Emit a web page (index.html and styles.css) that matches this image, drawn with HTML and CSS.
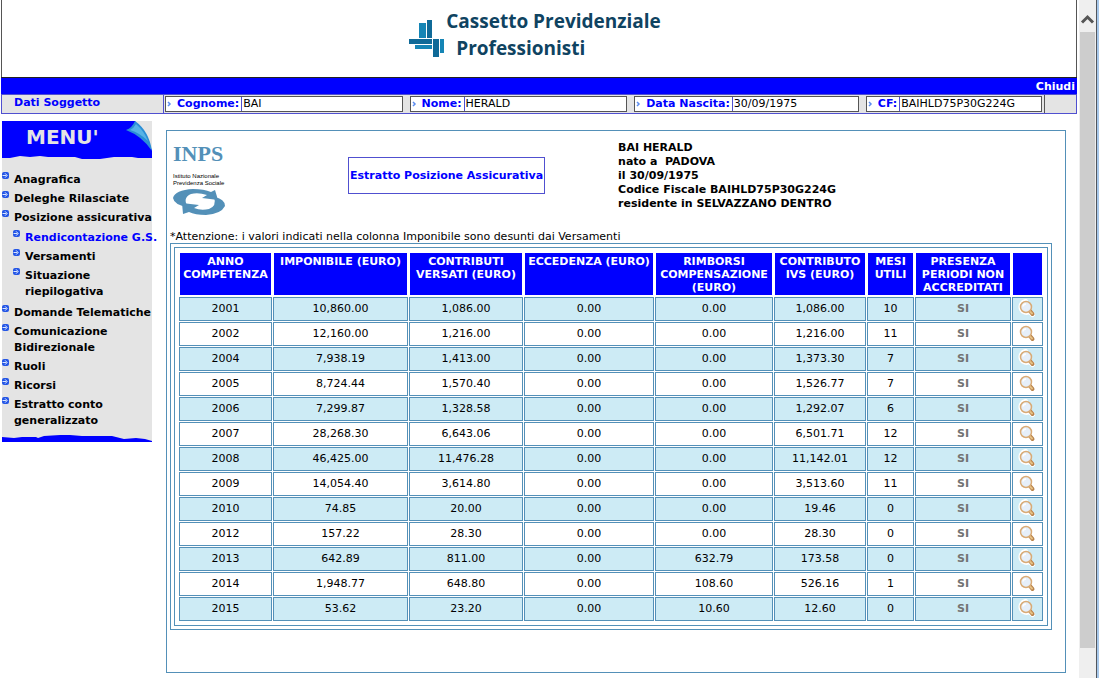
FILE: index.html
```html
<!DOCTYPE html>
<html lang="it">
<head>
<meta charset="utf-8">
<title>Cassetto Previdenziale Professionisti</title>
<link rel="stylesheet" href="styles.css">
</head>
<body>
<svg class="defs" width="0" height="0" aria-hidden="true">
  <symbol id="lens" viewBox="0 0 20 20">
    <path d="M7.500 2.500a5.500 5.500 0 1 0 4 10l3 3" fill="#fff" stroke="#fff" stroke-width="5" stroke-linejoin="round" stroke-linecap="round"/>
    <path d="M12 12l2.500 3" stroke="#b9824a" stroke-width="4" stroke-linecap="round"/>
    <path d="M11.500 12l2.500 2.500" stroke="#e6c184" stroke-width="2" stroke-linecap="round"/>
    <circle cx="8" cy="8" r="5.500" fill="#e6effa" stroke="#d9ab76" stroke-width="1.500"/>
    <path d="M5 7.500a3 3 0 0 1 3-2.500" stroke="#fff" stroke-width="1.500" fill="none"/>
  </symbol>
  <symbol id="bullet" viewBox="0 0 7 7">
    <rect width="7" height="7" rx="2" fill="#2456e6"/>
    <path d="M0.500 3.500h4M3 1.300l2.200 2.200L3 5.700" stroke="#dbe6ff" stroke-width="1" fill="none"/>
  </symbol>
  <symbol id="chev" viewBox="0 0 5 6">
    <path d="M1 1l2 2-2 2" stroke="#5b8cf0" stroke-width="1.500" fill="none"/>
  </symbol>
</svg>
<div class="window">
  <div class="page">
    <header class="banner">
      <svg class="brand-mark" viewBox="0 0 37 40" aria-hidden="true">
        <rect x="10" y="4" width="7" height="15" fill="#1585b5"/>
        <rect x="18" y="1" width="5" height="18" fill="#0f6a98"/>
        <rect x="0" y="20" width="23" height="5" fill="#0f6a98"/>
        <rect x="6" y="26" width="17" height="4" fill="#1585b5"/>
        <rect x="24" y="20" width="6" height="18" fill="#0f6a98"/>
        <rect x="31" y="20" width="4" height="14" fill="#1585b5"/>
      </svg>
      <h1 class="title"><span>Cassetto Previdenziale</span><span class="title-second">Professionisti</span></h1>
    </header>
    <div class="topbar"><a class="close" href="#">Chiudi</a></div>
    <form class="subject">
      <div class="subject-title">Dati Soggetto</div>
      <div class="fields">
        <div class="field surname"><label for="cognome"><svg class="chev"><use href="#chev"/></svg>Cognome:</label><input id="cognome" value="BAI"></div>
        <div class="field name"><label for="nome"><svg class="chev"><use href="#chev"/></svg>Nome:</label><input id="nome" value="HERALD"></div>
        <div class="field birth"><label for="nascita"><svg class="chev"><use href="#chev"/></svg>Data Nascita:</label><input id="nascita" value="30/09/1975"></div>
        <div class="field code"><label for="cf"><svg class="chev"><use href="#chev"/></svg>CF:</label><input id="cf" value="BAIHLD75P30G224G"></div>
      </div>
      <div class="subject-end"></div>
    </form>
    <div class="body">
      <nav class="menu">
        <div class="menu-head">
          <svg class="menu-art" viewBox="0 0 150 38" preserveAspectRatio="none" aria-hidden="true">
            <path d="M0 0H133L150 29V37H136L130 36H112L98 38H80L73 36H46L38 35 28 36 18 35 8 37H0z" fill="#00f"/>
            <path d="M124 9Q130 7 133 0Q147 10 150 30Q140 15 124 9z" fill="#2b8fd6"/>
            <path d="M128 9Q132 7 134 3Q142 10 146 20Q138 12 128 9z" fill="#57b3e6"/>
          </svg>
          <span class="menu-title">MENU'</span>
        </div>
        <ul class="menu-list">
          <li><svg class="bullet"><use href="#bullet"/></svg><a href="#">Anagrafica</a></li>
          <li><svg class="bullet"><use href="#bullet"/></svg><a href="#">Deleghe Rilasciate</a></li>
          <li><svg class="bullet"><use href="#bullet"/></svg><a href="#">Posizione assicurativa</a></li>
          <li class="group"><ul class="submenu">
            <li><svg class="bullet"><use href="#bullet"/></svg><a class="current" href="#">Rendicontazione G.S.</a></li>
            <li><svg class="bullet"><use href="#bullet"/></svg><a href="#">Versamenti</a></li>
            <li><svg class="bullet"><use href="#bullet"/></svg><a href="#">Situazione<br>riepilogativa</a></li>
          </ul></li>
          <li><svg class="bullet"><use href="#bullet"/></svg><a href="#">Domande Telematiche</a></li>
          <li><svg class="bullet"><use href="#bullet"/></svg><a href="#">Comunicazione<br>Bidirezionale</a></li>
          <li><svg class="bullet"><use href="#bullet"/></svg><a href="#">Ruoli</a></li>
          <li><svg class="bullet"><use href="#bullet"/></svg><a href="#">Ricorsi</a></li>
          <li><svg class="bullet"><use href="#bullet"/></svg><a href="#">Estratto conto<br>generalizzato</a></li>
        </ul>
        <svg class="menu-foot" viewBox="0 0 150 7" preserveAspectRatio="none" aria-hidden="true"><path d="M0 2L12 3 20 2H34L36 3 42 1 58 0 68 0 80 1H110L122 4 134 3 143 4 150 6V7H0z" fill="#00f"/></svg>
      </nav>
      <main class="panel">
        <div class="intro">
          <div class="inps">
            <span class="inps-name">INPS</span>
            <span class="inps-sub">Istituto Nazionale<br>Previdenza Sociale</span>
            <svg class="inps-art" viewBox="0 0 52 26" aria-hidden="true">
              <path d="M15 18Q1 16 0 9Q2 1 20 0Q31 0 38 3L42 1 45 11 29 9 34 6Q25 3 18 5Q9 9 15 18z" fill="#5390b8"/>
              <path d="M41 8Q52 10 52 17Q48 25 33 26Q22 26 16 23L10 25 9 14 26 16 21 19Q28 22 36 20Q44 17 41 8z" fill="#5390b8"/>
            </svg>
          </div>
          <div class="doc-title"><a href="#">Estratto Posizione Assicurativa</a></div>
          <address class="person">BAI HERALD<br>nato a&nbsp; PADOVA<br>il 30/09/1975<br>Codice Fiscale BAIHLD75P30G224G<br>residente in SELVAZZANO DENTRO</address>
        </div>
        <p class="note">*Attenzione: i valori indicati nella colonna Imponibile sono desunti dai Versamenti</p>
        <div class="frame"><div class="frame-inner">
          <table class="grid">
            <colgroup><col class="w-year"><col class="w-base"><col class="w-paid"><col class="w-over"><col class="w-comp"><col class="w-ivs"><col class="w-months"><col class="w-gaps"><col class="w-view"></colgroup>
            <thead><tr><th>ANNO COMPETENZA</th><th>IMPONIBILE (EURO)</th><th>CONTRIBUTI VERSATI (EURO)</th><th>ECCEDENZA (EURO)</th><th>RIMBORSI COMPENSAZIONE (EURO)</th><th>CONTRIBUTO IVS (EURO)</th><th>MESI UTILI</th><th>PRESENZA PERIODI NON ACCREDITATI</th><th></th></tr></thead>
            <tbody id="rows"></tbody>
          </table>
        </div></div>
      </main>
    </div>
  </div>
  <div class="scroll">
    <svg class="scroll-up" viewBox="0 0 16 32" aria-hidden="true"><path d="M3 22.500L8.500 17l5.500 5.500" fill="none" stroke="#555" stroke-width="3"/></svg>
    <div class="thumb"></div>
  </div>
</div>
<script src="rows.js"></script>
</body>
</html>
```
FILE: styles.css
```css
* { box-sizing: border-box; }
body { margin: 0; background: #fff; color: #000; font: 11px/14px "DejaVu Sans", Verdana, sans-serif; }
a { color: inherit; text-decoration: none; }
.defs { position: absolute; }
.window { display: flex; min-height: 100vh; }
.page { flex: 1; min-width: 0; padding-left: 1px; }

.banner { display: flex; justify-content: center; height: 77px; padding: 8px 8px 0 0; border: 1px solid #555; border-width: 0 1px; }
.brand-mark { width: 37px; height: 40px; margin-top: 11px; }
.title { display: flex; flex-direction: column; margin: 0; font: 700 19px/27px "Open Sans", "Noto Sans", sans-serif; color: #0f4361; }
.title-second { padding-left: 10px; }
.topbar { height: 17px; padding: 2px 2px 0; border-top: 1px solid #222; background: #00f; color: #fff; font-weight: bold; text-align: right; }
.close { display: block; }

.subject { display: flex; height: 20px; border: 1px solid #5050d0; background: #e4e4e4; color: #00f; font-weight: bold; }
.subject-title { width: 161px; padding-left: 12px; line-height: 15px; }
.fields { flex: 1; display: flex; gap: 7px; padding: 1px 2px 1px 1px; border: 1px solid #5050d0; border-width: 0 1px; border-right-color: #555; }
.subject-end { width: 31px; }
.field { display: flex; background: #fff; border: 1px solid #555; }
.field label { display: flex; align-items: center; gap: 5px; padding: 0 2px 0 1px; white-space: nowrap; border-right: 1px solid #5050d0; }
.field input { flex: 1; min-width: 0; width: 0; padding: 0 1px; border: 0; background: #fff; color: #000; font: 11px/14px "DejaVu Sans", Verdana, sans-serif; }
.chev { width: 5px; height: 6px; }
.surname { flex: 238; }
.name { flex: 218; }
.birth { flex: 225; }
.code { flex: 176; }

.body { display: flex; gap: 14px; align-items: flex-start; padding: 7px 11px 5px 1px; }
.menu { width: 150px; background: #e4e4e4; font-weight: bold; }
.menu-head { position: relative; height: 38px; }
.menu-art { display: block; width: 100%; height: 38px; }
.menu-title { position: absolute; left: 24px; top: 6px; color: #e4e4e4; font-size: 20px; line-height: 20px; }
.menu-list { margin: 0; padding: 13px 0 3px; list-style: none; line-height: 16px; }
.menu-list li { display: flex; gap: 5px; padding: 0 0 3px; }
.menu-list .group { display: block; padding: 0; }
.submenu { margin: 0; padding: 1px 0 2px 11px; list-style: none; }
.menu-list a { white-space: nowrap; }
.menu-list .current { color: #00f; }
.bullet { flex: none; width: 7px; height: 7px; }
.menu-foot { display: block; width: 100%; height: 7px; }

.panel { flex: 1; min-width: 0; min-height: 543px; margin-top: 9px; padding: 4px 13px 42px 3px; border: 1px solid #5390b8; }
.intro { display: flex; height: 95px; }
.inps { width: 60px; margin-left: 3px; display: flex; flex-direction: column; }
.inps-name { font: bold 22px/38px "Liberation Serif", serif; color: #5390b8; }
.inps-sub { font: 6px/7px "Liberation Sans", sans-serif; white-space: nowrap; }
.inps-art { width: 52px; height: 26px; margin-top: 2px; }
.doc-title { margin: 22px 73px 0 115px; height: 37px; padding: 0 1px; border: 1px solid #5050d0; color: #00f; font-weight: bold; line-height: 35px; white-space: nowrap; }
.person { padding-top: 6px; font-style: normal; font-weight: bold; white-space: nowrap; }
.note { margin: 0; line-height: 13px; }
.frame { border: 1px solid #5390b8; padding: 3px; }
.frame-inner { border: 1px solid #5390b8; padding: 3px; }
.grid { width: 100%; table-layout: fixed; border-collapse: separate; border-spacing: 1px; }
.grid th { height: 44px; padding: 2px 0 1px; border: 1px solid #fff; background: #00f; color: #fff; line-height: 13px; vertical-align: top; }
.grid td { height: 24px; padding: 0; border: 1px solid #5390b8; text-align: center; line-height: 14px; }
.grid tbody tr:nth-child(odd) td { background: #cdebf5; }
.grid tbody .gap { color: #737373; font-weight: bold; }
.look { display: block; width: 20px; height: 20px; margin: 0 auto; padding: 0; border: 0; background: none; }
.look svg { display: block; width: 20px; height: 20px; }
.w-year { width: 93px; }
.w-base { width: 135px; }
.w-paid { width: 114px; }
.w-over { width: 130px; }
.w-comp { width: 118px; }
.w-ivs { width: 92px; }
.w-months { width: 47px; }
.w-gaps { width: 96px; }
.w-view { width: 31px; }

.scroll { width: 22px; padding-left: 2px; border-right: 2px solid #a8c8ea; background: linear-gradient(#50555c, #50555c) right / 1px 100% no-repeat, linear-gradient(90deg, #fff 2px, #efefef 2px); }
.scroll-up { display: block; width: 16px; height: 32px; }
.thumb { width: 15px; height: calc(100vh - 62px); margin-left: 1px; background: #cdcdcd; }
```
FILE: rows.js
```js
const rows = [
  ["2001", "10,860.00", "1,086.00", "0.00", "0.00", "1,086.00", "10"],
  ["2002", "12,160.00", "1,216.00", "0.00", "0.00", "1,216.00", "11"],
  ["2004", "7,938.19", "1,413.00", "0.00", "0.00", "1,373.30", "7"],
  ["2005", "8,724.44", "1,570.40", "0.00", "0.00", "1,526.77", "7"],
  ["2006", "7,299.87", "1,328.58", "0.00", "0.00", "1,292.07", "6"],
  ["2007", "28,268.30", "6,643.06", "0.00", "0.00", "6,501.71", "12"],
  ["2008", "46,425.00", "11,476.28", "0.00", "0.00", "11,142.01", "12"],
  ["2009", "14,054.40", "3,614.80", "0.00", "0.00", "3,513.60", "11"],
  ["2010", "74.85", "20.00", "0.00", "0.00", "19.46", "0"],
  ["2012", "157.22", "28.30", "0.00", "0.00", "28.30", "0"],
  ["2013", "642.89", "811.00", "0.00", "632.79", "173.58", "0"],
  ["2014", "1,948.77", "648.80", "0.00", "108.60", "526.16", "1"],
  ["2015", "53.62", "23.20", "0.00", "10.60", "12.60", "0"]
];
document.getElementById("rows").innerHTML = rows.map(r =>
  "<tr>" + r.map(v => `<td>${v}</td>`).join("") +
  `<td class="gap">SI</td><td><button class="look" type="button" aria-label="Dettaglio ${r[0]}"><svg><use href="#lens"/></svg></button></td></tr>`
).join("");
```
